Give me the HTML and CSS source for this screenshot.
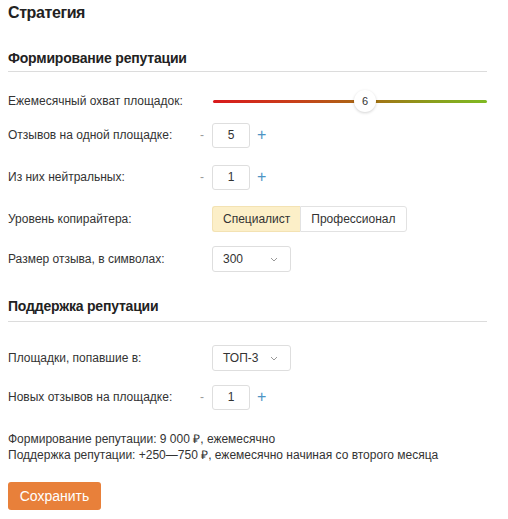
FILE: index.html
```html
<!DOCTYPE html>
<html lang="ru">
<head>
<meta charset="utf-8">
<link rel="stylesheet" href="styles.css">
</head>
<body>
<div class="page">
  <h1 class="title">Стратегия</h1>

  <h2 class="section-title">Формирование репутации</h2>
  <div class="rows">
    <div class="row row-slider">
      <div class="label">Ежемесячный охват площадок:</div>
      <div class="control">
        <div class="slider">
          <div class="track"></div>
          <div class="thumb" style="left: 55.5%">6</div>
        </div>
      </div>
    </div>
    <div class="row">
      <div class="label">Отзывов на одной площадке:</div>
      <div class="control stepper">
        <span class="minus">-</span><span class="num">5</span><span class="plus">+</span>
      </div>
    </div>
    <div class="row">
      <div class="label">Из них нейтральных:</div>
      <div class="control stepper">
        <span class="minus">-</span><span class="num">1</span><span class="plus">+</span>
      </div>
    </div>
    <div class="row">
      <div class="label">Уровень копирайтера:</div>
      <div class="control">
        <div class="segmented">
          <span class="seg active">Специалист</span><span class="seg">Профессионал</span>
        </div>
      </div>
    </div>
    <div class="row row-last">
      <div class="label">Размер отзыва, в символах:</div>
      <div class="control">
        <div class="select"><span>300</span>
          <svg class="chev" width="8" height="5" viewBox="0 0 8 5"><path d="M1 1l3 3 3-3" fill="none" stroke="#999" stroke-width="1"/></svg>
        </div>
      </div>
    </div>
  </div>

  <h2 class="section-title second">Поддержка репутации</h2>
  <div class="rows rows2">
    <div class="row">
      <div class="label">Площадки, попавшие в:</div>
      <div class="control">
        <div class="select"><span>ТОП-3</span>
          <svg class="chev" width="8" height="5" viewBox="0 0 8 5"><path d="M1 1l3 3 3-3" fill="none" stroke="#999" stroke-width="1"/></svg>
        </div>
      </div>
    </div>
    <div class="row">
      <div class="label">Новых отзывов на площадке:</div>
      <div class="control stepper">
        <span class="minus">-</span><span class="num">1</span><span class="plus">+</span>
      </div>
    </div>
  </div>

  <div class="summary">
    <div>Формирование репутации: 9 000 ₽, ежемесячно</div>
    <div>Поддержка репутации: +250—750 ₽, ежемесячно начиная со второго месяца</div>
  </div>

  <button class="save">Сохранить</button>
</div>
</body>
</html>
```

FILE: styles.css
```css
* { box-sizing: border-box; }
html, body { margin: 0; padding: 0; background: #fff; }
body {
  font-family: "Liberation Sans", Arial, sans-serif;
  font-size: 12px;
  color: #333;
}
.page {
  width: 487px;
  padding: 3px 0 0 8px;
}
.title {
  margin: 0;
  font-size: 16px;
  line-height: 20px;
  font-weight: bold;
  letter-spacing: -0.4px;
  color: #222;
}
.section-title {
  margin: 26px 0 0;
  font-size: 14px;
  line-height: 18px;
  font-weight: bold;
  letter-spacing: -0.2px;
  color: #222;
  padding-bottom: 4px;
  border-bottom: 1px solid #dcdcdc;
}
.section-title.second { margin-top: 25px; padding-bottom: 6px; }
.rows {
  display: flex;
  flex-direction: column;
  margin-top: 16px;
}
.rows2 { margin-top: 23px; }
.row {
  display: flex;
  align-items: center;
  height: 26px;
}
.row + .row { margin-top: 16px; }
.row-slider + .row { margin-top: 8px; }
.row + .row-last { margin-top: 14px; }
.rows2 .row + .row { margin-top: 13px; }
.label {
  width: 204px;
  flex: none;
}
.control { flex: 1; display: flex; align-items: center; }
.slider {
  position: relative;
  width: 274px;
  height: 26px;
  margin-left: 1px;
}
.track {
  position: absolute;
  left: 0; right: 0; top: 12px;
  height: 3px;
  border-radius: 2px;
  background: linear-gradient(to right, #d9191c 0%, #c8401a 30%, #a86a14 55%, #8a9e1c 80%, #7fba22 100%);
}
.thumb {
  position: absolute;
  top: 2px;
  width: 22px; height: 22px;
  margin-left: -11px;
  border-radius: 50%;
  background: #fff;
  box-shadow: 0 1px 3px rgba(0,0,0,0.18);
  text-align: center;
  line-height: 22px;
  font-size: 11px;
  color: #333;
}
.stepper { margin-left: -20px; }
.minus {
  width: 20px;
  text-align: center;
  color: #9a9a9a;
  font-size: 12px;
}
.num {
  width: 38px;
  height: 25px;
  border: 1px solid #dedede;
  border-radius: 3px;
  text-align: center;
  line-height: 23px;
  color: #333;
}
.plus {
  margin-left: 7px;
  color: #4d94c4;
  font-size: 16px;
}
.segmented {
  display: flex;
  height: 26px;
}
.seg {
  display: flex;
  align-items: center;
  padding: 0 10px 0 10px;
  border: 1px solid #e2e2e2;
  background: #fff;
  color: #333;
  font-size: 12px;
}
.seg:first-child { border-radius: 3px 0 0 3px; border-right: none; }
.seg:last-child { border-radius: 0 3px 3px 0; }
.seg.active { background: #fcefc8; border-color: #f3e2b3; }
.select {
  display: flex;
  align-items: center;
  justify-content: space-between;
  width: 79px;
  height: 26px;
  padding: 0 12px 0 10px;
  border: 1px solid #dedede;
  border-radius: 3px;
  color: #333;
}
.summary {
  margin-top: 21px;
  line-height: 16px;
  color: #333;
}
.save {
  margin-top: 19px;
  width: 93px;
  height: 28px;
  border: none;
  border-radius: 3px;
  background: #e8803a;
  color: #fff;
  font-family: "Liberation Sans", Arial, sans-serif;
  font-size: 14px;
  padding: 0;
}
```
